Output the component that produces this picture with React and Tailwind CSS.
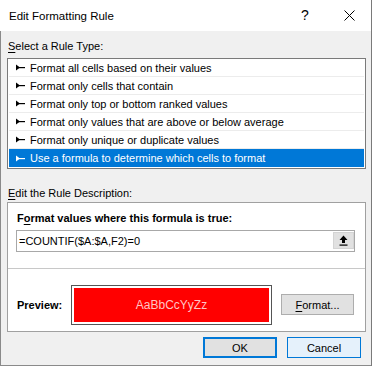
import React from "react";

const rows = [
  "Format all cells based on their values",
  "Format only cells that contain",
  "Format only top or bottom ranked values",
  "Format only values that are above or below average",
  "Format only unique or duplicate values",
  "Use a formula to determine which cells to format",
];

function Arrow({ color }) {
  return (
    <svg width="9" height="7" viewBox="0 0 9 7" className="shrink-0">
      <polygon points="0,0.5 0,6.5 4,3.5" fill={color} />
      <rect x="2" y="3" width="7" height="1.2" fill={color} />
    </svg>
  );
}

export default function App() {
  return (
    <div
      className="w-[373px] h-[366px] bg-white flex flex-col text-[11px] text-black"
      style={{ fontFamily: '"Liberation Sans", Arial, sans-serif' }}
    >
      <div className="w-[372px] h-full flex flex-col border-r border-[#7a7a7a]">
        {/* Title bar */}
        <div className="h-[31px] shrink-0 bg-white flex items-center pl-[9px] relative">
          <span className="text-[11.5px] leading-[14px]">Edit Formatting Rule</span>
          <span className="absolute left-[301px] top-[7px] text-[14px] leading-[16px]">?</span>
          <svg className="absolute left-[344px] top-[10px]" width="11" height="11" viewBox="0 0 11 11">
            <path d="M0.5 0.5 L10.5 10.5 M10.5 0.5 L0.5 10.5" stroke="#000" strokeWidth="1" />
          </svg>
        </div>

        {/* Body */}
        <div className="flex-1 bg-[#f0f0f0] border-l border-b border-[#8a8a8a] pl-[6px] pr-[5px] pt-[8px] flex flex-col">
          <div className="leading-[14px] h-[14px] mb-[5px] pl-[1px]">
            <span className="underline underline-offset-2">S</span>elect a Rule Type:
          </div>

          <div className="w-[359px] h-[111px] border border-[#7a7a7a] bg-white px-[1px] flex flex-col">
            {rows.map((r, i) => {
              const sel = i === rows.length - 1;
              return (
                <div
                  key={i}
                  className={
                    "h-[18px] flex items-center gap-[5px] pl-[7px] " +
                    (sel ? "bg-[#0078d7] text-white" : "border-b border-[#ececec]")
                  }
                >
                  <Arrow color={sel ? "#fff" : "#000"} />
                  <span className="leading-[14px]">{r}</span>
                </div>
              );
            })}
          </div>

          <div className="leading-[14px] h-[14px] mt-[17px] mb-[2px] pl-[1px]">
            <span className="underline underline-offset-2">E</span>dit the Rule Description:
          </div>

          <div className="w-[359px] h-[130px] border border-[#a0a0a0] bg-white flex flex-col">
            <div className="pt-[8px] pl-[9px] font-bold leading-[14px] h-[22px]">
              F<span className="underline underline-offset-2">o</span>rmat values where this formula is true:
            </div>
            <div className="ml-[8px] mt-[5px] w-[339px] h-[22px] border border-[#a8a8a8] flex items-start relative">
              <span className="pl-[2px] leading-[20px]">=COUNTIF($A:$A,F2)=0</span>
              <div className="absolute right-0 top-[1px] w-[21px] h-[17px] bg-[#e1e1e1] border border-[#d4d4d4] flex items-center justify-center">
                <svg width="9" height="11" viewBox="0 0 9 11">
                  <path d="M4.5 0.5 L8.5 5 L6 5 L6 8 L3 8 L3 5 L0.5 5 Z" fill="#000" />
                  <rect x="0.5" y="9.5" width="8" height="1.2" fill="#000" />
                </svg>
              </div>
            </div>
            <div className="mt-[16px] h-px bg-[#c8c8c8]" />
            <div className="mt-[16px] flex items-start">
              <div className="pl-[9px] w-[63px] font-bold leading-[14px] mt-[13px]">Preview:</div>
              <div className="w-[201px] h-[40px] border border-[#555] p-[2px]">
                <div className="w-full h-full bg-[#ff0000] flex items-center justify-center text-[#ffc4c4] text-[12px]">
                  AaBbCcYyZz
                </div>
              </div>
              <div className="ml-[9px] mt-[9px] w-[73px] h-[21px] bg-[#e1e1e1] border border-[#adadad] flex items-center justify-center leading-[14px]">
                <span>
                  <span className="underline underline-offset-2">F</span>ormat...
                </span>
              </div>
            </div>
          </div>

          <div className="mt-[5px] flex justify-end gap-[10px] pr-[5px]">
            <div className="w-[74px] h-[21px] bg-[#e1e1e1] border-2 border-[#0078d7] flex items-center justify-center leading-[14px]">
              OK
            </div>
            <div className="w-[74px] h-[21px] bg-[#e5f1fb] border border-[#0078d7] flex items-center justify-center leading-[14px]">
              Cancel
            </div>
          </div>
        </div>
      </div>
    </div>
  );
}
